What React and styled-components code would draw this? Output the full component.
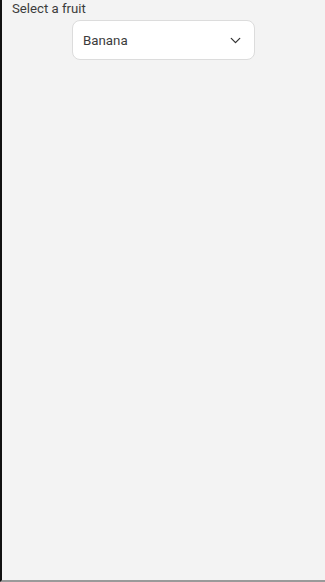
import React, { useState } from 'react';
import styled, { createGlobalStyle } from 'styled-components';
import { ChevronDown } from 'lucide-react';

const GlobalStyle = createGlobalStyle`
  html, body {
    margin: 0;
    padding: 0;
    background: #f3f3f3;
  }
  * {
    box-sizing: border-box;
  }
`;

const fruits = ['Apple', 'Banana', 'Cherry', 'Mango', 'Orange'];

const App = () => {
  const [fruit] = useState('Banana');

  return (
    <>
      <GlobalStyle />
      <Screen>
        <Label>Select a fruit</Label>
        <SelectRow>
          <SelectBox title={fruits.join(', ')}>
            <SelectValue>{fruit}</SelectValue>
            <ChevronDown size={17} strokeWidth={1.8} color="#333" />
          </SelectBox>
        </SelectRow>
      </Screen>
    </>
  );
};

export default App;

const Screen = styled.div`
  height: 582px;
  background: #f3f3f3;
  border-left: 2px solid #111;
  border-bottom: 2px solid #9a9a9a;
  font-family: Roboto, 'Liberation Sans', sans-serif;
  color: #3c3c3c;
`;

const Label = styled.div`
  padding: 1px 0 0 10px;
  font-size: 13.2px;
  line-height: 16px;
`;

const SelectRow = styled.div`
  display: flex;
  justify-content: center;
  margin-top: 3px;
`;

const SelectBox = styled.div`
  width: 183px;
  height: 40px;
  display: flex;
  align-items: center;
  justify-content: space-between;
  padding: 0 10px 0 10px;
  background: #fff;
  border: 1px solid #dcdcdc;
  border-radius: 8px;
`;

const SelectValue = styled.span`
  font-size: 13.3px;
  color: #3c3c3c;
`;
